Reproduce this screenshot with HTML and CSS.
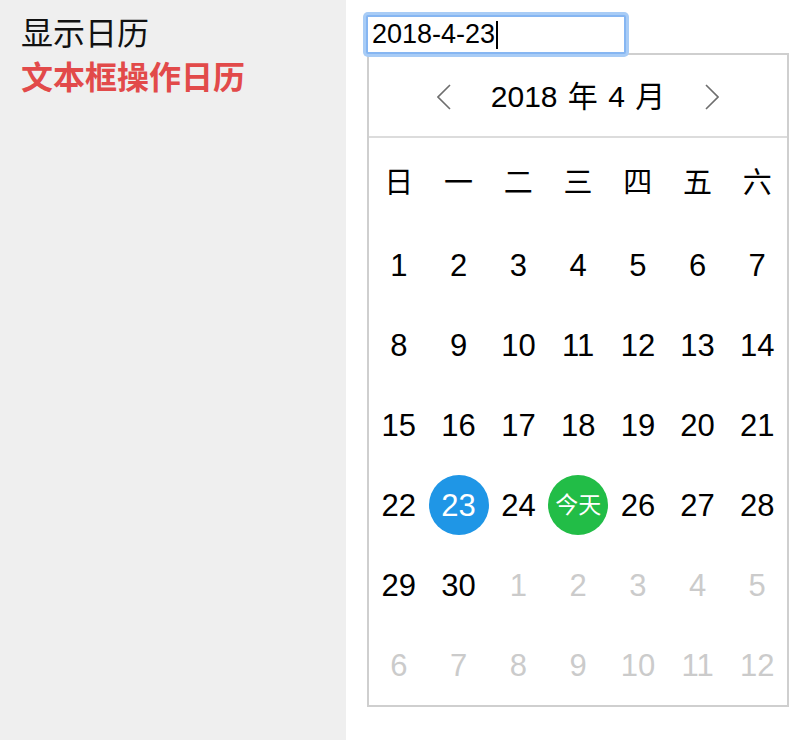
FILE: index.html
```html
<!DOCTYPE html>
<html lang="zh-CN">
<head>
<meta charset="utf-8">
<title>文本框操作日历</title>
<link rel="stylesheet" href="styles.css">
</head>
<body>
<div class="page">
  <aside class="sidebar">
    <div class="nav-item">显示日历</div>
    <div class="nav-item active">文本框操作日历</div>
  </aside>
  <main class="main">
    <div class="date-input" role="textbox">2018-4-23<span class="caret"></span></div>
    <div class="calendar">
      <div class="cal-header">
        <span class="arrow"><svg width="14" height="26" viewBox="0 0 14 26"><polyline points="13,1 1,13 13,25" fill="none" stroke="#6e6e6e" stroke-width="1.6"/></svg></span>
        <span class="cal-title">2018 年 4 月</span>
        <span class="arrow"><svg width="14" height="26" viewBox="0 0 14 26"><polyline points="1,1 13,13 1,25" fill="none" stroke="#6e6e6e" stroke-width="1.6"/></svg></span>
      </div>
      <div class="weekdays">
        <span>日</span><span>一</span><span>二</span><span>三</span><span>四</span><span>五</span><span>六</span>
      </div>
      <div class="days">
        <span>1</span><span>2</span><span>3</span><span>4</span><span>5</span><span>6</span><span>7</span>
        <span>8</span><span>9</span><span>10</span><span>11</span><span>12</span><span>13</span><span>14</span>
        <span>15</span><span>16</span><span>17</span><span>18</span><span>19</span><span>20</span><span>21</span>
        <span>22</span><span><b class="dot selected">23</b></span><span>24</span><span><b class="dot today">今天</b></span><span>26</span><span>27</span><span>28</span>
        <span>29</span><span>30</span><span class="muted">1</span><span class="muted">2</span><span class="muted">3</span><span class="muted">4</span><span class="muted">5</span>
        <span class="muted">6</span><span class="muted">7</span><span class="muted">8</span><span class="muted">9</span><span class="muted">10</span><span class="muted">11</span><span class="muted">12</span>
      </div>
    </div>
  </main>
</div>
</body>
</html>
```

FILE: styles.css
```css
html, body {
  margin: 0;
  padding: 0;
  background: #ffffff;
}

body {
  font-family: "Liberation Sans", "Noto Sans CJK SC", sans-serif;
  color: #000;
}

.page {
  display: flex;
  min-height: 740px;
}

.sidebar {
  width: 346px;
  flex: none;
  background: #efefef;
  padding: 12px 0 0 21px;
  box-sizing: border-box;
}

.nav-item {
  font-size: 32px;
  line-height: 44px;
  color: #111;
}

.nav-item.active {
  color: #e24a4a;
  font-weight: bold;
}

.main {
  padding: 15px 0 0 20px;
}

.date-input {
  position: relative;
  z-index: 1;
  width: 260px;
  height: 39px;
  box-sizing: border-box;
  border: 2px solid #86b6f2;
  box-shadow: 0 0 0 3px #a8ccf6;
  border-radius: 2px;
  background: #fff;
  font-size: 27px;
  line-height: 35px;
  padding-left: 4px;
  display: flex;
  align-items: center;
}

.caret {
  display: inline-block;
  width: 2px;
  height: 28px;
  background: #000;
  margin-left: 1px;
}

.calendar {
  margin: -1px 0 0 1px;
  width: 422px;
  box-sizing: border-box;
  border: 2px solid #cfcfcf;
  background: #fff;
}

.cal-header {
  height: 83px;
  border-bottom: 2px solid #dcdcdc;
  display: flex;
  align-items: center;
  justify-content: center;
  gap: 36px;
  box-sizing: border-box;
  padding-top: 2px;
}

.arrow {
  display: flex;
  width: 14px;
  height: 26px;
}

.cal-title {
  font-size: 30px;
  line-height: 1;
  width: 182px;
  text-align: center;
  white-space: nowrap;
  word-spacing: 2px;
}

.weekdays,
.days {
  display: grid;
  grid-template-columns: repeat(7, 1fr);
}

.weekdays span {
  height: 87px;
  display: flex;
  align-items: center;
  justify-content: center;
  font-size: 29px;
  line-height: 1;
  padding-top: 4px;
  box-sizing: border-box;
}

.days span {
  height: 80px;
  display: flex;
  align-items: center;
  justify-content: center;
  font-size: 31px;
  line-height: 1;
}

.days span.muted {
  color: #cbcbcb;
}

.dot {
  width: 60px;
  height: 60px;
  border-radius: 50%;
  display: flex;
  align-items: center;
  justify-content: center;
  color: #fff;
  font-weight: normal;
}

.dot.selected {
  background: #1f96e6;
  font-size: 31px;
}

.dot.today {
  background: #22bd47;
  font-size: 23px;
}
```
